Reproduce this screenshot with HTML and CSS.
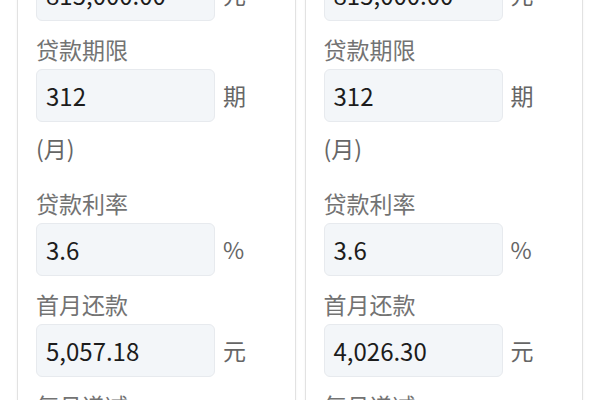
FILE: index.html
```html
<!DOCTYPE html>
<html lang="zh-CN">
<head>
<meta charset="utf-8">
<title>贷款计算</title>
<link rel="stylesheet" href="styles.css">
</head>
<body>
<div class="compare">
  <section class="card">
    <div class="field first">
      <div class="label">贷款金额</div>
      <div class="row"><span class="input">815,000.00</span><span class="unit">元</span></div>
    </div>
    <div class="field">
      <div class="label">贷款期限</div>
      <div class="row"><span class="input">312</span><span class="unit">期 (月)</span></div>
    </div>
    <div class="field">
      <div class="label">贷款利率</div>
      <div class="row"><span class="input">3.6</span><span class="unit">%</span></div>
    </div>
    <div class="field">
      <div class="label">首月还款</div>
      <div class="row"><span class="input">5,057.18</span><span class="unit">元</span></div>
    </div>
    <div class="field">
      <div class="label">每月递减</div>
      <div class="row"><span class="input">10.88</span><span class="unit">元</span></div>
    </div>
  </section>
  <section class="card">
    <div class="field first">
      <div class="label">贷款金额</div>
      <div class="row"><span class="input">815,000.00</span><span class="unit">元</span></div>
    </div>
    <div class="field">
      <div class="label">贷款期限</div>
      <div class="row"><span class="input">312</span><span class="unit">期 (月)</span></div>
    </div>
    <div class="field">
      <div class="label">贷款利率</div>
      <div class="row"><span class="input">3.6</span><span class="unit">%</span></div>
    </div>
    <div class="field">
      <div class="label">首月还款</div>
      <div class="row"><span class="input">4,026.30</span><span class="unit">元</span></div>
    </div>
    <div class="field">
      <div class="label">每月递减</div>
      <div class="row"><span class="input">0.00</span><span class="unit">元</span></div>
    </div>
  </section>
</div>
</body>
</html>
```

FILE: styles.css
```css
html, body {
  margin: 0;
  padding: 0;
  background: #ffffff;
}

body {
  font-family: "Noto Sans CJK SC", "Noto Sans", sans-serif;
  color: #222;
  overflow: hidden;
}

.compare {
  display: grid;
  grid-template-columns: 1fr 1fr;
  gap: 9px;
  padding: 0 17px;
  margin-top: -81px;
}

.card {
  border: 1px solid #e2e2e2;
  box-shadow: 0 0 2px rgba(0, 0, 0, 0.06);
  background: #fff;
  padding: 0 18px 20px 18px;
}

.label {
  margin: 12px 0 4px;
  font-size: 23px;
  line-height: 32px;
  color: #737373;
}

.row {
  font-size: 23px;
  line-height: 53px;
}

.input {
  display: inline-block;
  vertical-align: top;
  box-sizing: border-box;
  width: 179px;
  height: 53px;
  padding: 0 9px;
  border: 1px solid #e7eaee;
  border-radius: 6px;
  background: #f3f6f9;
  color: #1c1c1c;
  font-size: 24px;
  line-height: 51px;
}

.unit {
  margin-left: 8px;
  color: #666;
}
```
